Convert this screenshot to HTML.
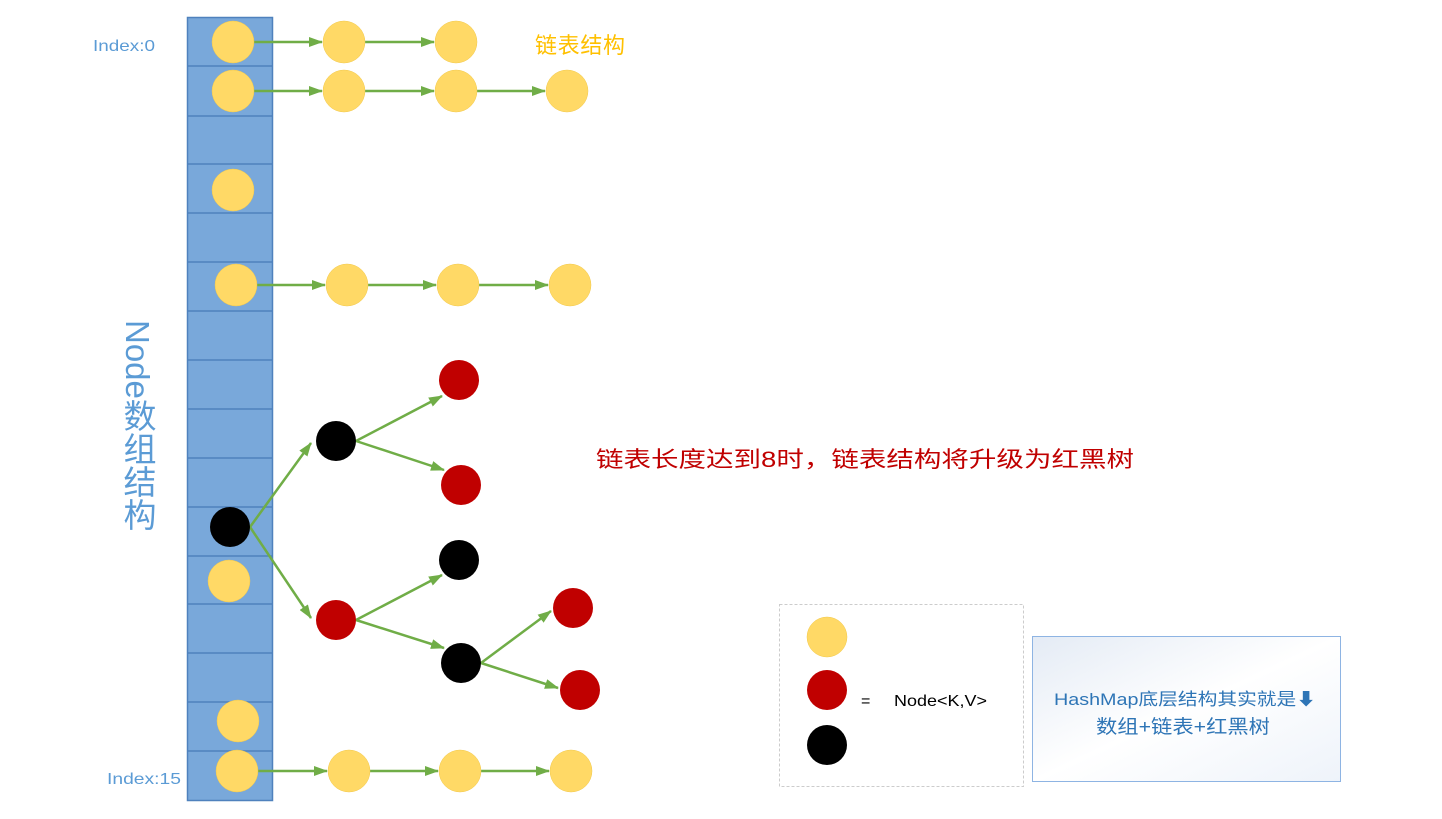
<!DOCTYPE html>
<html><head><meta charset="utf-8"><style>
html,body{margin:0;padding:0;background:#fff;}
body{width:1442px;height:819px;overflow:hidden;position:relative;font-family:"Liberation Sans","Noto Sans CJK SC",sans-serif;}
.vt{position:absolute;left:117px;top:320px;writing-mode:vertical-rl;font-size:33px;color:#5b9bd5;line-height:40px;font-family:"Liberation Sans","Noto Sans CJK SC",sans-serif;}
</style></head><body>
<svg width="1442" height="819" style="position:absolute;left:0;top:0" font-family="Liberation Sans, Noto Sans CJK SC, sans-serif">
<defs>
<marker id="a" markerWidth="14" markerHeight="10" refX="13" refY="5" orient="auto" markerUnits="userSpaceOnUse"><path d="M0,0 L14,5 L0,10 z" fill="#70ad47"/></marker>
<linearGradient id="g" x1="0" y1="0" x2="1" y2="1"><stop offset="0" stop-color="#e4ebf5"/><stop offset="0.5" stop-color="#ffffff"/><stop offset="1" stop-color="#eef3fa"/></linearGradient>
</defs>
<rect x="187.5" y="17.5" width="85" height="783" fill="#79a8da" stroke="#4f81bd" stroke-width="1.5"/>
<g stroke="#4f81bd" stroke-width="1.5">
<line x1="187" x2="272" y1="66" y2="66"/><line x1="187" x2="272" y1="116" y2="116"/><line x1="187" x2="272" y1="164" y2="164"/><line x1="187" x2="272" y1="213" y2="213"/><line x1="187" x2="272" y1="262" y2="262"/><line x1="187" x2="272" y1="311" y2="311"/><line x1="187" x2="272" y1="360" y2="360"/><line x1="187" x2="272" y1="409" y2="409"/><line x1="187" x2="272" y1="458" y2="458"/><line x1="187" x2="272" y1="507" y2="507"/><line x1="187" x2="272" y1="556" y2="556"/><line x1="187" x2="272" y1="604" y2="604"/><line x1="187" x2="272" y1="653" y2="653"/><line x1="187" x2="272" y1="702" y2="702"/><line x1="187" x2="272" y1="751" y2="751"/>
</g>
<g stroke="#70ad47" stroke-width="2.5" marker-end="url(#a)" fill="none">
<line x1="254" y1="42" x2="322" y2="42"/><line x1="365" y1="42" x2="434" y2="42"/>
<line x1="254" y1="91" x2="322" y2="91"/><line x1="365" y1="91" x2="434" y2="91"/><line x1="477" y1="91" x2="545" y2="91"/>
<line x1="257" y1="285" x2="325" y2="285"/><line x1="368" y1="285" x2="436" y2="285"/><line x1="479" y1="285" x2="548" y2="285"/>
<line x1="258" y1="771" x2="327" y2="771"/><line x1="370" y1="771" x2="438" y2="771"/><line x1="481" y1="771" x2="549" y2="771"/>
<line x1="250" y1="527" x2="311" y2="443"/><line x1="250" y1="527" x2="311" y2="618"/>
<line x1="356" y1="441" x2="442" y2="396"/><line x1="356" y1="441" x2="444" y2="470"/>
<line x1="356" y1="620" x2="442" y2="575"/><line x1="356" y1="620" x2="444" y2="648"/>
<line x1="481" y1="663" x2="551" y2="611"/><line x1="481" y1="663" x2="558" y2="688"/>
</g>
<g fill="#ffd966" stroke="#f2c94c" stroke-width="0.5">
<circle cx="233" cy="42" r="21"/><circle cx="344" cy="42" r="21"/><circle cx="456" cy="42" r="21"/>
<circle cx="233" cy="91" r="21"/><circle cx="344" cy="91" r="21"/><circle cx="456" cy="91" r="21"/><circle cx="567" cy="91" r="21"/>
<circle cx="233" cy="190" r="21"/>
<circle cx="236" cy="285" r="21"/><circle cx="347" cy="285" r="21"/><circle cx="458" cy="285" r="21"/><circle cx="570" cy="285" r="21"/>
<circle cx="229" cy="581" r="21"/><circle cx="238" cy="721" r="21"/>
<circle cx="237" cy="771" r="21"/><circle cx="349" cy="771" r="21"/><circle cx="460" cy="771" r="21"/><circle cx="571" cy="771" r="21"/>
<circle cx="827" cy="637" r="20"/>
</g>
<g fill="#000"><circle cx="230" cy="527" r="20"/><circle cx="336" cy="441" r="20"/><circle cx="459" cy="560" r="20"/><circle cx="461" cy="663" r="20"/><circle cx="827" cy="745" r="20"/></g>
<g fill="#c00000"><circle cx="459" cy="380" r="20"/><circle cx="461" cy="485" r="20"/><circle cx="336" cy="620" r="20"/><circle cx="573" cy="608" r="20"/><circle cx="580" cy="690" r="20"/><circle cx="827" cy="690" r="20"/></g>
<text x="93" y="51" font-size="16" fill="#5b9bd5" textLength="62" lengthAdjust="spacingAndGlyphs">Index:0</text>
<text x="107" y="784" font-size="16" fill="#5b9bd5" textLength="74" lengthAdjust="spacingAndGlyphs">Index:15</text>
<text x="535" y="53" font-size="22" fill="#ffc000" textLength="90">链表结构</text>
<text x="596" y="467" font-size="22" fill="#c00000" textLength="538" lengthAdjust="spacingAndGlyphs">链表长度达到8时，链表结构将升级为红黑树</text>
<rect x="779.5" y="604.5" width="244" height="182" fill="none" stroke="#cccccc" stroke-dasharray="3,2"/>
<text x="861" y="706" font-size="16" fill="#000">=</text>
<text x="894" y="706" font-size="16" fill="#000" textLength="93" lengthAdjust="spacingAndGlyphs">Node&lt;K,V&gt;</text>
<rect x="1032.5" y="636.5" width="308" height="145" fill="url(#g)" stroke="#8eb4e3"/>
<text x="1054" y="705" font-size="17" fill="#2e75b6" textLength="262" lengthAdjust="spacingAndGlyphs">HashMap底层结构其实就是⬇</text>
<text x="1096" y="733" font-size="19" fill="#2e75b6" textLength="174" lengthAdjust="spacingAndGlyphs">数组+链表+红黑树</text>
</svg>
<div class="vt">Node数组结构</div>
</body></html>
